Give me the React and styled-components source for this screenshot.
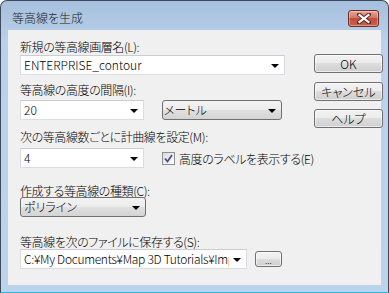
import React from 'react'
import styled, { createGlobalStyle } from 'styled-components'

const Global = createGlobalStyle`
html, body {
  margin:0;
  padding:0;
  background:#fff;
}
body {
  font-family: "Noto Sans CJK JP", "Liberation Sans", sans-serif;
  font-size:12px;
  font-weight:300;
  color:#000;
  font-feature-settings: "palt";
}
`

const Window = styled.div`
width:389px;
height:293px;
box-sizing:border-box;
border:1px solid #3e4b5a;
border-bottom-color:#2fb7d8;
border-radius:7px 7px 0 0;
background:linear-gradient(#a6bfdc, #b9d1ea 40px, #bcd3ec);
padding:0 7px 7px 7px;
display:flex;
flex-direction:column;
`

const TitleBar = styled.div`
height:29px;
flex-shrink:0;
display:flex;
justify-content:space-between;
align-items:flex-start;
`

const Title = styled.div`
margin:10px 0 0 4px;
font-size:12px;
line-height:14px;
color:#1b1b1b;
`

const CloseButton = styled.div`
width:31px;
height:17px;
margin:9px 2px 0 0;
box-sizing:border-box;
border:1px solid #6e2b22;
border-radius:3px;
background:linear-gradient(#e6a597, #d17a68 45%, #c24c3a 50%, #c9604a 100%);
box-shadow:inset 0 0 0 1px rgba(255,255,255,0.35);
display:flex;
align-items:center;
justify-content:center;
`

const Client = styled.div`
flex:1;
background:#f0f0f0;
display:flex;
`

const LeftCol = styled.div`
flex:1;
padding-left:12px;
display:flex;
flex-direction:column;
`

const RightCol = styled.div`
width:69px;
margin-right:14px;
padding-top:24px;
display:flex;
flex-direction:column;
`

const Label = styled.div`
height:10px;
line-height:10px;
margin-top:${p => p.$mt}px;
white-space:nowrap;
letter-spacing:-0.4px;
`

const Row = styled.div`
display:flex;
align-items:center;
gap:${p => p.$gap || 0}px;
margin-top:${p => p.$mt}px;
`

const Combo = styled.div`
width:${p => p.$w}px;
height:20px;
box-sizing:border-box;
background:#fff;
border:1px solid #d9dce2;
border-top-color:#c9ccd3;
display:flex;
align-items:center;
padding-left:3px;
`

const Value = styled.span`
flex:1;
overflow:hidden;
white-space:nowrap;
line-height:16px;
letter-spacing:${p => p.$ls ?? 0}px;
`

const Arrow = styled.span`
width:0;
height:0;
margin:1px 5px 0 4px;
border-left:4px solid transparent;
border-right:4px solid transparent;
border-top:4px solid #000;
flex-shrink:0;
`

const DropList = styled.div`
width:${p => p.$w}px;
height:20px;
box-sizing:border-box;
border:1px solid #707070;
border-radius:3px;
background:linear-gradient(#f3f3f3, #ececec 50%, #e0e0e0 50%, #d4d4d4);
display:flex;
align-items:center;
padding-left:${p => p.$pl ?? 3}px;
`

const Button = styled.div`
width:${p => p.$w || 69}px;
height:${p => p.$h || 19}px;
margin-top:${p => p.$mt || 0}px;
box-sizing:border-box;
border:1px solid #707070;
border-radius:3px;
background:linear-gradient(#f2f2f2, #ebebeb 50%, #dddddd 50%, #cfcfcf);
box-shadow:inset 0 0 0 1px rgba(255,255,255,0.6);
display:flex;
align-items:center;
justify-content:center;
line-height:14px;
`

const Dots = styled.span`
font-size:9px;
line-height:6px;
height:6px;
margin-top:3px;
`

const Check = styled.label`
display:flex;
align-items:center;
gap:4px;
white-space:nowrap;
letter-spacing:-0.4px;
`

const Box = styled.span`
width:13px;
height:13px;
box-sizing:border-box;
border:1px solid #8e8f8f;
background:linear-gradient(135deg, #dcdcdc, #fdfdfd);
display:flex;
align-items:center;
justify-content:center;
`

const App = () => {
  return (
    <>
      <Global />
      <Window>
        <TitleBar>
          <Title>等高線を生成</Title>
          <CloseButton>
            <svg width="14" height="11" viewBox="0 0 14 11">
              <path d="M2 1.5 L12 9.5 M12 1.5 L2 9.5" stroke="#5a2a24" strokeWidth="4" strokeLinecap="square" />
              <path d="M2.5 2 L11.5 9 M11.5 2 L2.5 9" stroke="#fff" strokeWidth="2.2" strokeLinecap="square" />
            </svg>
          </CloseButton>
        </TitleBar>
        <Client>
          <LeftCol>
            <Label $mt={12}>新規の等高線画層名(L):</Label>
            <Row $mt={3}>
              <Combo $w={265}>
                <Value>ENTERPRISE_contour</Value>
                <Arrow />
              </Combo>
            </Row>

            <Label $mt={10}>等高線の高度の間隔(I):</Label>
            <Row $mt={5} $gap={18}>
              <Combo $w={124}>
                <Value>20</Value>
                <Arrow />
              </Combo>
              <DropList $w={120} $pl={1}>
                <Value>メートル</Value>
                <Arrow />
              </DropList>
            </Row>

            <Label $mt={12}>次の等高線数ごとに計曲線を設定(M):</Label>
            <Row $mt={6} $gap={18}>
              <Combo $w={124}>
                <Value>4</Value>
                <Arrow />
              </Combo>
              <Check>
                <Box>
                  <svg width="9" height="9" viewBox="0 0 9 9">
                    <path d="M1 4.5 L3.5 7.5 L8 1" fill="none" stroke="#3f5690" strokeWidth="1.8" />
                  </svg>
                </Box>
                高度のラベルを表示する(E)
              </Check>
            </Row>

            <Label $mt={18}>作成する等高線の種類(C):</Label>
            <Row $mt={1}>
              <DropList $w={126}>
                <Value>ポリライン</Value>
                <Arrow />
              </DropList>
            </Row>

            <Label $mt={20}>等高線を次のファイルに保存する(S):</Label>
            <Row $mt={2} $gap={8}>
              <Combo $w={227}>
                <Value $ls={-0.3}>C:¥My Documents¥Map 3D Tutorials¥Imports</Value>
                <Arrow />
              </Combo>
              <Button $w={27} $h={16}>
                <Dots>...</Dots>
              </Button>
            </Row>
          </LeftCol>
          <RightCol>
            <Button>OK</Button>
            <Button $mt={9}>キャンセル</Button>
            <Button $mt={8}>ヘルプ</Button>
          </RightCol>
        </Client>
      </Window>
    </>
  )
}

export default App
